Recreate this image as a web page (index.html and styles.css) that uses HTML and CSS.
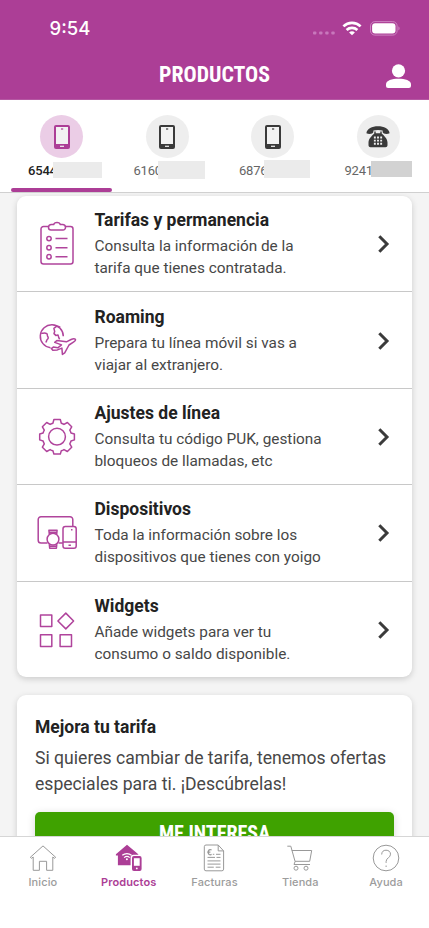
FILE: index.html
```html
<!DOCTYPE html>
<html lang="es">
<head>
<meta charset="utf-8">
<meta name="viewport" content="width=device-width, initial-scale=1">
<title>Productos</title>
<link rel="stylesheet" href="styles.css">
</head>
<body>
<svg class="defs" width="0" height="0" aria-hidden="true">
  <symbol id="mobile" viewBox="0 0 16 24">
    <rect x="0" y="0" width="16" height="24" rx="2" fill="currentColor"/>
    <rect class="screen" x="2" y="2" width="12" height="17"/>
    <path d="M7 4h2.2" stroke="currentColor" stroke-width="1.2"/>
    <path class="key" d="M6 21.3h4" stroke-width="1.2"/>
  </symbol>
  <symbol id="chevron" viewBox="0 0 12 18">
    <path d="M1.3 1.3 9 9l-7.700 7.700" fill="none" stroke="#3b3b3b" stroke-width="3"/>
  </symbol>
</svg>
<div class="app">
  <header class="header">
    <div class="status">
      <span class="clock">9:54</span>
      <div class="signals">
        <svg class="dots" width="22" height="4" viewBox="0 0 22 4" fill="#c878bc"><rect x="0" y=".5" width="3.400" height="3" rx="1"/><rect x="6.100" y=".5" width="3.400" height="3" rx="1"/><rect x="12.200" y=".5" width="3.400" height="3" rx="1"/><rect x="18.300" y=".5" width="3.400" height="3" rx="1"/></svg>
        <svg class="wifi" width="20" height="15" viewBox="0 0 20 15" fill="none" stroke="#fff" stroke-width="2.700"><path d="M1.400 5.400a12.400 12.400 0 0 1 17.200 0M4.600 8.900a8 8 0 0 1 10.800 0"/><path d="M10 14.300 7.100 11.500a4 4 0 0 1 5.800 0Z" fill="#fff" stroke="none"/></svg>
        <svg class="battery" width="30" height="15" viewBox="0 0 30 15"><rect x=".5" y=".6" width="26.600" height="13.500" rx="4.300" fill="none" stroke="#cd83c2"/><rect x="2.100" y="2.200" width="23.400" height="10.300" rx="3" fill="#fff"/><path d="M28.400 5.200c1.600.8 1.600 3.400 0 4.200z" fill="#cd83c2"/></svg>
      </div>
    </div>
    <div class="titlebar">
      <h1 class="title">PRODUCTOS</h1>
      <svg class="user" width="25" height="25" viewBox="0 0 25 25" fill="#fff"><circle cx="12.500" cy="6.800" r="6.600"/><path d="M0 20.200c0-3.700 5.800-5.500 12.500-5.500S25 16.500 25 20.200v1.800a2.100 2.100 0 0 1-2.100 2.100H2.100A2.100 2.100 0 0 1 0 22z"/></svg>
    </div>
  </header>

  <nav class="lines">
    <div class="line active">
      <span class="disc"><svg width="16" height="24"><use href="#mobile"/></svg></span>
      <span class="number">6544<i class="mask m1"></i></span>
    </div>
    <div class="line">
      <span class="disc"><svg width="16" height="24"><use href="#mobile"/></svg></span>
      <span class="number">6160<i class="mask m2"></i></span>
    </div>
    <div class="line">
      <span class="disc"><svg width="16" height="24"><use href="#mobile"/></svg></span>
      <span class="number">6876<i class="mask m3"></i></span>
    </div>
    <div class="line">
      <span class="disc"><svg width="24" height="22" viewBox="0 0 24 22"><path d="M.4 7.200C1 2.800 6 .3 12 .3s11 2.500 11.600 6.900c-1.500 1-4.200 1-5.700.4-1-.5-1.400-1.500-1.300-3-2.600-.8-6.600-.8-9.200 0 .1 1.500-.3 2.500-1.300 3-1.500.6-4.200.6-5.700-.4Z" fill="#3a3a3a"/><path d="M8.300 5.500h1.400V7.300h4.600V5.500h1.400V7.500c3 2.800 5.800 5.500 5.800 9v2.800c0 1.100-.9 2-2 2h-15c-1.100 0-2-.9-2-2v-2.800c0-3.500 2.800-6.200 5.800-9Z" fill="#3a3a3a"/><path d="M7.900 11.500h8.200M7.900 14.600h8.200M7.900 17.700h8.200" stroke="#eee" stroke-width="1.900" stroke-dasharray="1.900 1.250"/></svg></span>
      <span class="number">9241<i class="mask m4"></i></span>
    </div>
  </nav>

  <main class="content">
    <section class="card menu">
      <a class="row">
        <svg class="icon" width="40" height="46" viewBox="0 0 40 46"><path d="M11.500 5.500H6.500A2.500 2.500 0 0 0 4 8v32.500A2.500 2.500 0 0 0 6.500 43h27a2.500 2.500 0 0 0 2.500-2.500V8a2.500 2.500 0 0 0-2.500-2.500h-5M14 8.900h12a2.500 2.500 0 0 0 2.500-2.500c0-1.800-1.200-2.800-3-2.800h-2.200C22.600.9 17.400.9 16.700 3.600h-2.200c-1.800 0-3 1-3 2.800A2.500 2.500 0 0 0 14 8.900Z"/><circle cx="12" cy="17.600" r="2.200"/><circle cx="12" cy="26.700" r="2.200"/><circle cx="12" cy="35.800" r="2.200"/><path d="M18.500 17.600h12M18.500 26.700h12M18.500 35.800h12"/></svg>
        <div class="copy"><h2>Tarifas y permanencia</h2><p>Consulta la información de la<br>tarifa que tienes contratada.</p></div>
        <svg class="chev" width="12" height="18"><use href="#chevron"/></svg>
      </a>
      <a class="row">
        <svg class="icon" width="40" height="46" viewBox="0 0 40 46"><path d="M13.500 29.700A11.500 11.500 0 1 1 26.300 18.200"/><path d="M4.200 15.200c2 .1 4.200-.5 5.500.4 1.200.8.2 1.900 1 2.900.9 1.100.6 2.200-.5 3-.9.8-.2 2.200-1.600 2.700M19.500 8.400l-2.600 2 .8 3.200-.7 2 1.800 1.800 2.200-.5.800 2.800.8 1.600M19.500 8.400c1.600-.2 2.700.3 3.800 1"/><path d="m14.300 30.600 2-1.500 4.500.7 3.700-2.900-6.800-2.500 2.200-1.900 9.500 1.300 4.700-2.300c1.600-.8 3.500-.9 4.300-.2.500 1-.7 2-2 2.800l-4.400 2.900-4.300 7.800-2.300 1.600-.5-6.300-4.500 1.800-4.600.4Z"/></svg>
        <div class="copy"><h2>Roaming</h2><p>Prepara tu línea móvil si vas a<br>viajar al extranjero.</p></div>
        <svg class="chev" width="12" height="18"><use href="#chevron"/></svg>
      </a>
      <a class="row">
        <svg class="icon" width="40" height="46" viewBox="0 0 40 46"><circle cx="20" cy="22.700" r="8.400"/><path d="M16.900 5.500h6.400l1 3.700q1.500.4 2.700 1.200l3.400-1.900 4.300 4.300-1.900 3.400q.8 1.300 1.200 2.800l3.400 1v5.900l-3.400 1.100q-.4 1.500-1.200 2.800l1.900 3.400-4.300 4.300-3.400-1.900q-1.300.8-2.700 1.200l-1 3.300h-6.400l-1-3.300q-1.500-.4-2.800-1.200l-3.400 1.900-4.300-4.300 1.900-3.400q-.8-1.300-1.200-2.800L2.700 25.900V20l3.400-1q.4-1.500 1.200-2.800l-1.900-3.400 4.300-4.300 3.400 1.900q1.300-.8 2.800-1.200Z"/></svg>
        <div class="copy"><h2>Ajustes de línea</h2><p>Consulta tu código PUK, gestiona<br>bloqueos de llamadas, etc</p></div>
        <svg class="chev" width="12" height="18"><use href="#chevron"/></svg>
      </a>
      <a class="row">
        <svg class="icon" width="40" height="46" viewBox="0 0 40 46"><path d="M10.500 33H4a2.800 2.800 0 0 1-2.800-2.800V9.500A2.800 2.800 0 0 1 4 6.700h29a2.800 2.800 0 0 1 2.800 2.800v7M21.500 33h4.400"/><rect x="26" y="16.500" width="13.200" height="21.800" rx="2.300"/><path d="M26 32h13.200M31.500 35.200h2.400M34 19.800h1.500"/><circle cx="16" cy="29.200" r="5.900"/><path d="m12.300 24.300-.4-4.100h8.200l-.4 4.100M12.300 34.200l.4 4.100h6.700l.4-4.100M12 22.300h8M12.600 36.300h6.900"/></svg>
        <div class="copy"><h2>Dispositivos</h2><p>Toda la información sobre los<br>dispositivos que tienes con yoigo</p></div>
        <svg class="chev" width="12" height="18"><use href="#chevron"/></svg>
      </a>
      <a class="row">
        <svg class="icon" width="40" height="46" viewBox="0 0 40 46"><path d="M3.500 8h11.300v11.600H3.500zM3.500 27.800h11.300v11.600H3.500zM23.100 27.800h11.400v11.600H23.100zM28.800 6.100l7.800 7.900-7.800 7.900-7.900-7.900z"/></svg>
        <div class="copy"><h2>Widgets</h2><p>Añade widgets para ver tu<br>consumo o saldo disponible.</p></div>
        <svg class="chev" width="12" height="18"><use href="#chevron"/></svg>
      </a>
    </section>
    <section class="card promo">
      <h2>Mejora tu tarifa</h2>
      <p>Si quieres cambiar de tarifa, tenemos ofertas<br>especiales para ti. ¡Descúbrelas!</p>
      <button class="cta"><span>ME INTERESA</span></button>
    </section>
  </main>

  <nav class="tabs">
    <a class="tab"><svg width="28" height="28" viewBox="0 0 28 28"><path d="M1.300 13.300 14 1.900l12.700 11.400-1.200 1-1.700-1.300v13.300h-6.200V17.300h-7.200v9H4.200V13l-1.700 1.300Z"/></svg><span>Inicio</span></a>
    <a class="tab on"><svg width="28" height="28" viewBox="0 0 28 28"><path d="M12 .7.900 10.200v1.300h2v9.800h12.700V13.500c0-1.600 1-2.700 2.700-2.700h5V10.200Z" fill="#ac3e96" stroke="none"/><path d="M7.300 11.300a6.900 6.900 0 0 1 9.200 0M9.100 13.600a4.200 4.200 0 0 1 5.600 0" stroke="#fff" stroke-width="1.200"/><circle cx="11.900" cy="15.300" r="1" fill="#fff" stroke="none"/><rect x="17" y="12" width="9.600" height="15" rx="1.900" fill="#ac3e96" stroke="none"/><path d="M18.900 14.200h5.800v7.600h-5.800z" fill="#fff" stroke="none"/><circle cx="21.800" cy="24.400" r=".9" fill="#fff" stroke="none"/></svg><span>Productos</span></a>
    <a class="tab"><svg width="28" height="28" viewBox="0 0 28 28"><path d="M6 1h12.200l5.400 5.900v18.200a1.700 1.700 0 0 1-1.700 1.700H6a1.700 1.700 0 0 1-1.700-1.700V2.700A1.700 1.700 0 0 1 6 1ZM18.200 1v5.900h5.400M7.500 13.400h7.500M16.500 13.400h4M7.500 16.900h13M7.500 20.100h13M7.500 23.200h6.300M15.700 23.200h4.800M12.800 10.300h1.500M16 10.300h4.500"/><path d="M11.600 6c-1.900-1.100-3.400.1-3.400 2.200s1.500 3.200 3.400 2.200M7.200 8.200h3.200" stroke-width="1.300"/></svg><span>Facturas</span></a>
    <a class="tab"><svg width="28" height="28" viewBox="0 0 28 28"><path d="M1.300 2.200h3.500l4.300 15.300L8 20.500h16M5.800 6.500h19.900l-2 10.800H9"/><circle cx="10" cy="24.200" r="2"/><circle cx="20" cy="24.200" r="2"/></svg><span>Tienda</span></a>
    <a class="tab"><svg width="28" height="28" viewBox="0 0 28 28"><circle cx="14" cy="14" r="12.800"/><path d="M9.700 10.500c0-2.800 1.700-4.300 4.300-4.300s4.500 1.500 4.500 4c0 3.800-4.400 3.500-4.400 7.300v1.400M14.100 21.500v1.500"/></svg><span>Ayuda</span></a>
  </nav>
</div>
</body>
</html>
```
FILE: styles.css
```css
* { box-sizing: border-box; margin: 0; padding: 0; }
body { font-family: Roboto, "Liberation Sans", sans-serif; background: #fff; color: #474747; }
.defs { display: block; position: absolute; }
.app { width: 429px; height: 928px; display: flex; flex-direction: column; overflow: hidden; }
svg { display: block; flex: none; }

.header { height: 100px; flex: none; background: #ac3e96; border-bottom: 1px solid #b558a3; color: #fff; }
.status { height: 56px; display: flex; justify-content: space-between; padding: 0 29px 0 49.500px; }
.clock { font: 550 18.500px/24px Inter, sans-serif; margin-top: 16px; }
.signals { display: flex; padding-top: 21px; }
.dots { margin-top: 10px; }
.wifi { margin-left: 7px; }
.battery { margin-left: 8px; }
.titlebar { display: grid; grid-template-columns: 1fr auto 1fr; height: 43px; padding: 0 18px; }
.title { grid-column: 2; font-size: 21.800px; line-height: 26px; margin-top: 6px; font-weight: 700; font-stretch: condensed; white-space: nowrap; }
.user { justify-self: end; margin-top: 8px; }

.lines { height: 93px; flex: none; display: grid; grid-template-columns: repeat(4, 101px); column-gap: 4.500px; padding-left: 11px; background: #fff; border-bottom: 1px solid #d0d0d0; position: relative; z-index: 1; }
.line { display: flex; flex-direction: column; align-items: center; padding-top: 15px; color: #3a3a3a; position: relative; }
.disc { width: 43px; height: 43px; border-radius: 50%; background: #eee; display: flex; align-items: center; justify-content: center; }
.screen { fill: #f2f2f2; }
.key { stroke: #f2f2f2; }
.active .disc { background: #ebcde6; }
.active .disc svg { color: #ac3e96; }
.active::after { content: ""; position: absolute; left: 0; right: 0; bottom: 0; height: 4.500px; border-radius: 2px; background: #ac3e96; }
.number { position: relative; width: 67px; margin-top: 5px; font-size: 13px; line-height: 16px; color: #666; letter-spacing: -.2px; }
.active .number { color: #222; font-weight: 500; }
.mask { position: absolute; background: #ebebeb; }
.m1 { left: 25px; top: -1px; width: 49px; height: 16px; }
.m2 { left: 24px; top: -2px; width: 47px; height: 18px; }
.m3 { left: 25px; top: -3px; width: 46px; height: 18px; }
.m4 { left: 26.500px; top: -2px; width: 41px; height: 16px; background: #d2d2d2; }

.content { flex: 1; min-height: 0; overflow: hidden; background: #f4f4f4; padding: 3px 17px 0 17px; display: flex; flex-direction: column; gap: 18px; }
.card { flex: none; background: #fff; border-radius: 9px; box-shadow: 0 2px 6px rgba(0,0,0,.17); width: 395px; }
.row { display: flex; height: 96.400px; border-bottom: 1.500px solid #c8c8c8; padding: 11.200px 22px 0 20px; }
.row:last-child { height: 95.400px; border-bottom: 0; }
.icon { margin-top: 14px; fill: none; stroke: #b0449c; stroke-width: 1.500; stroke-linejoin: round; }
.copy { flex: 1; margin-left: 17.500px; white-space: nowrap; }
h2 { font-size: 17.500px; line-height: 26px; font-weight: 700; color: #222; }
.copy p { font-size: 15.350px; line-height: 22px; margin-top: 2px; }
.chev { margin-top: 28px; }
.promo { height: 200px; padding: 19.500px 18px; }
.promo p { font-size: 17.600px; line-height: 26px; margin-top: 4.500px; white-space: nowrap; }
.cta { display: flex; justify-content: center; width: 359px; height: 50px; margin-top: 15.500px; border: 0; border-radius: 5px; background: #3fa200; color: #fff; font: 700 20px/24px Roboto, sans-serif; font-stretch: condensed; box-shadow: 0 2px 8px rgba(0,0,0,.16); padding-top: 8.500px; align-items: flex-start; white-space: nowrap; }

.tabs { height: 92px; flex: none; display: grid; grid-template-columns: repeat(5, 1fr); background: #fff; border-top: 1px solid #d6d6d6; position: relative; }
.tab { display: flex; flex-direction: column; align-items: center; padding-top: 7px; color: #9c9c9c; font: 500 11px/14px Inter, sans-serif; }
.tab svg { fill: none; stroke: #999; stroke-width: 1; }
.tab span { margin-top: 3px; letter-spacing: .1px; }
.tab.on { color: #ac3e96; font-weight: 600; }
```
